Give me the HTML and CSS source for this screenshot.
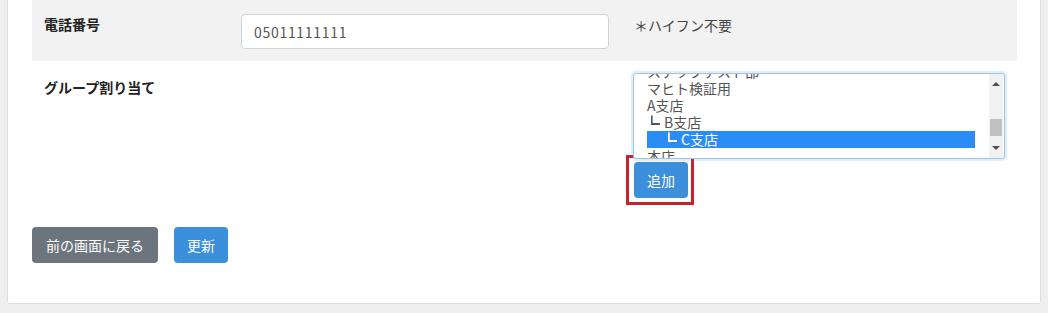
FILE: index.html
```html
<!DOCTYPE html>
<html lang="ja">
<head>
  <meta charset="UTF-8" />
  <title>ユーザー編集</title>
  <link rel="stylesheet" href="styles.css">
</head>
<body>
  <div class="card">
    <div class="form-row shaded">
      <div class="col col-label"><label class="form-label">電話番号</label></div>
      <div class="col"><input class="text-input" type="text" value="05011111111" /></div>
      <div class="col"><p class="hint">＊ハイフン不要</p></div>
    </div>

    <div class="form-row">
      <div class="col col-label"><label class="form-label label-low">グループ割り当て</label></div>
      <div class="col"></div>
      <div class="col">
        <div class="listbox">
          <ul class="options">
            <li>ステップテスト部</li>
            <li>マヒト検証用</li>
            <li>A支店</li>
            <li class="lv1"><span class="tree">┗</span>B支店</li>
            <li class="lv2 selected"><span class="tree">┗</span>C支店</li>
            <li>本店</li>
          </ul>
          <div class="scrollbar">
            <span class="arrow up"></span>
            <span class="thumb"></span>
            <span class="arrow down"></span>
          </div>
        </div>
        <div class="marker">
          <button class="btn btn-blue">追加</button>
        </div>
      </div>
    </div>

    <div class="actions">
      <button class="btn btn-gray">前の画面に戻る</button>
      <button class="btn btn-blue">更新</button>
    </div>
  </div>
</body>
</html>
```

FILE: styles.css
```css
body {
  margin: 0;
  background: #eeeeee;
  font-family: "Noto Sans CJK JP", "Noto Sans", sans-serif;
  font-size: 14px;
  color: #333;
  overflow: hidden;
}

.card {
  margin: -25px 7px 0;
  padding: 24px 23px 40px 24px;
  background: #fff;
  border: 1px solid #dedede;
  border-radius: 3px;
}

.form-row {
  display: grid;
  grid-template-columns: 197px 392px 1fr;
  padding: 12px 0;
}

.form-row.shaded {
  background: #f2f2f2;
  padding: 14px 0 12px;
}

.col {
  padding: 0 12px;
  min-width: 0;
}

.form-label {
  display: block;
  font-weight: bold;
  line-height: 20px;
  color: #222;
}

.label-low {
  margin-top: 4px;
}

.text-input {
  display: block;
  box-sizing: border-box;
  width: 100%;
  height: 35px;
  padding: 0 12px;
  border: 1px solid #d3d3d3;
  border-radius: 4px;
  background: #fff;
  font-family: inherit;
  font-size: 14px;
  letter-spacing: 0.7px;
  color: #555;
}

.hint {
  margin: 1px 0 0 1px;
  line-height: 20px;
  color: #444;
}

.listbox {
  position: relative;
  box-sizing: border-box;
  height: 86px;
  padding: 0 29px 0 13px;
  border: 1px solid #9cc6ea;
  border-radius: 3px;
  box-shadow: 0 0 0 2px rgba(80, 150, 220, 0.18);
  background: #fff;
  overflow: hidden;
}

.options {
  list-style: none;
  margin: -11px 0 0;
  padding: 0;
  color: #555;
}

.options li {
  height: 17px;
  line-height: 17px;
  white-space: nowrap;
}

/* 全角の┗は左半分が空白なので、右半分だけ見せる */
.options .tree {
  display: inline-block;
  width: 9px;
  margin-right: 4px;
  font-size: 17px;
  font-weight: bold;
  line-height: 17px;
  text-indent: -8px;
  vertical-align: -4px;
  overflow: hidden;
}

.options .lv1 {
  padding-left: 4px;
}

.options .lv2 {
  padding-left: 21px;
}

.options .selected {
  background: #2a8df5;
  color: #fff;
}

.scrollbar {
  position: absolute;
  top: 0;
  right: 1px;
  bottom: 0;
  width: 14px;
  background: #f1f1f1;
}

.arrow {
  position: absolute;
  left: 3px;
  width: 0;
  height: 0;
  border-left: 4px solid transparent;
  border-right: 4px solid transparent;
}

.arrow.up {
  top: 8px;
  border-bottom: 4px solid #505050;
}

.arrow.down {
  bottom: 8px;
  border-top: 4px solid #505050;
}

.thumb {
  position: absolute;
  top: 45px;
  left: 1px;
  width: 12px;
  height: 17px;
  background: #c1c1c1;
}

.marker {
  display: inline-flex;
  margin: -4px 0 0 -7px;
  padding: 4px 3px 4px 5px;
  border: 3px solid #c9222c;
}

.btn {
  height: 36px;
  padding: 0 13px;
  border: none;
  border-radius: 4px;
  font-family: inherit;
  font-size: 14px;
  color: #fff;
  cursor: pointer;
}

.btn-blue {
  background: #3b8fdb;
}

.btn-gray {
  background: #6c757d;
  padding: 0 14px;
}

.actions {
  display: flex;
  gap: 16px;
  margin-top: 10px;
}
```
